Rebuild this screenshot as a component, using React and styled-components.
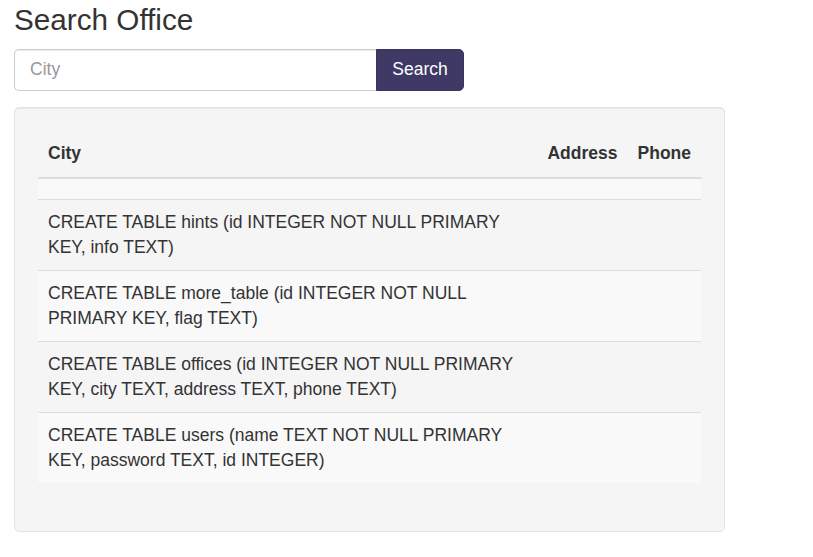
import React from "react";
import styled, { createGlobalStyle } from "styled-components";

const rows = [
  "",
  "CREATE TABLE hints (id INTEGER NOT NULL PRIMARY KEY, info TEXT)",
  "CREATE TABLE more_table (id INTEGER NOT NULL PRIMARY KEY, flag TEXT)",
  "CREATE TABLE offices (id INTEGER NOT NULL PRIMARY KEY, city TEXT, address TEXT, phone TEXT)",
  "CREATE TABLE users (name TEXT NOT NULL PRIMARY KEY, password TEXT, id INTEGER)",
];

const GlobalStyle = createGlobalStyle`
  body {
    margin: 0;
    background: #fff;
    color: #333;
    font-family: "Liberation Sans", Arial, Helvetica, sans-serif;
    font-size: 17.5px;
    line-height: 25px;
  }
  * {
    box-sizing: border-box;
  }
`;

const Page = styled.div`
  padding: 0 14px;
`;

const Title = styled.h3`
  margin: 4px 0 12px;
  font-size: 29.7px;
  font-weight: 500;
  line-height: 1.1;
  color: #333;
`;

const SearchForm = styled.form`
  display: flex;
  width: 450px;
  height: 42px;
  margin-bottom: 16px;
`;

const CityInput = styled.input`
  flex: 1;
  height: 100%;
  padding: 7px 15px;
  border: 1px solid #ccc;
  border-right: none;
  border-radius: 5px 0 0 5px;
  font: inherit;
  color: #555;
  box-shadow: inset 0 1px 1px rgba(0, 0, 0, 0.075);
  outline: none;

  &::placeholder {
    color: #999;
  }
`;

const SearchButton = styled.button`
  width: 88px;
  height: 100%;
  border: 1px solid #3a345f;
  border-radius: 0 5px 5px 0;
  background: #3f3966;
  color: #fff;
  font: inherit;
  cursor: pointer;
`;

const Well = styled.div`
  width: 711px;
  padding: 23px 23px 24px;
  background: #f5f5f5;
  border: 1px solid #e3e3e3;
  border-radius: 5px;
  box-shadow: inset 0 1px 1px rgba(0, 0, 0, 0.05);
`;

const Table = styled.table`
  width: 100%;
  margin-bottom: 24px;
  border-collapse: collapse;
  border-spacing: 0;
`;

const HeadCell = styled.th`
  padding: 10px 10px 11px;
  text-align: left;
  vertical-align: bottom;
  font-weight: 700;
  white-space: nowrap;
  border-bottom: 2.5px solid #ddd;
`;

const Row = styled.tr`
  &:nth-of-type(odd) {
    background: #f9f9f9;
  }
`;

const Cell = styled.td`
  padding: 10px;
  vertical-align: top;
  border-top: 1px solid #ddd;
`;

export default function App() {
  return (
    <>
      <GlobalStyle />
      <Page>
        <Title>Search Office</Title>
        <SearchForm onSubmit={(e) => e.preventDefault()}>
          <CityInput type="text" placeholder="City" />
          <SearchButton type="submit">Search</SearchButton>
        </SearchForm>
        <Well>
          <Table>
            <thead>
              <tr>
                <HeadCell>City</HeadCell>
                <HeadCell>Address</HeadCell>
                <HeadCell>Phone</HeadCell>
              </tr>
            </thead>
            <tbody>
              {rows.map((city, i) => (
                <Row key={i}>
                  <Cell>{city}</Cell>
                  <Cell></Cell>
                  <Cell></Cell>
                </Row>
              ))}
            </tbody>
          </Table>
        </Well>
      </Page>
    </>
  );
}
